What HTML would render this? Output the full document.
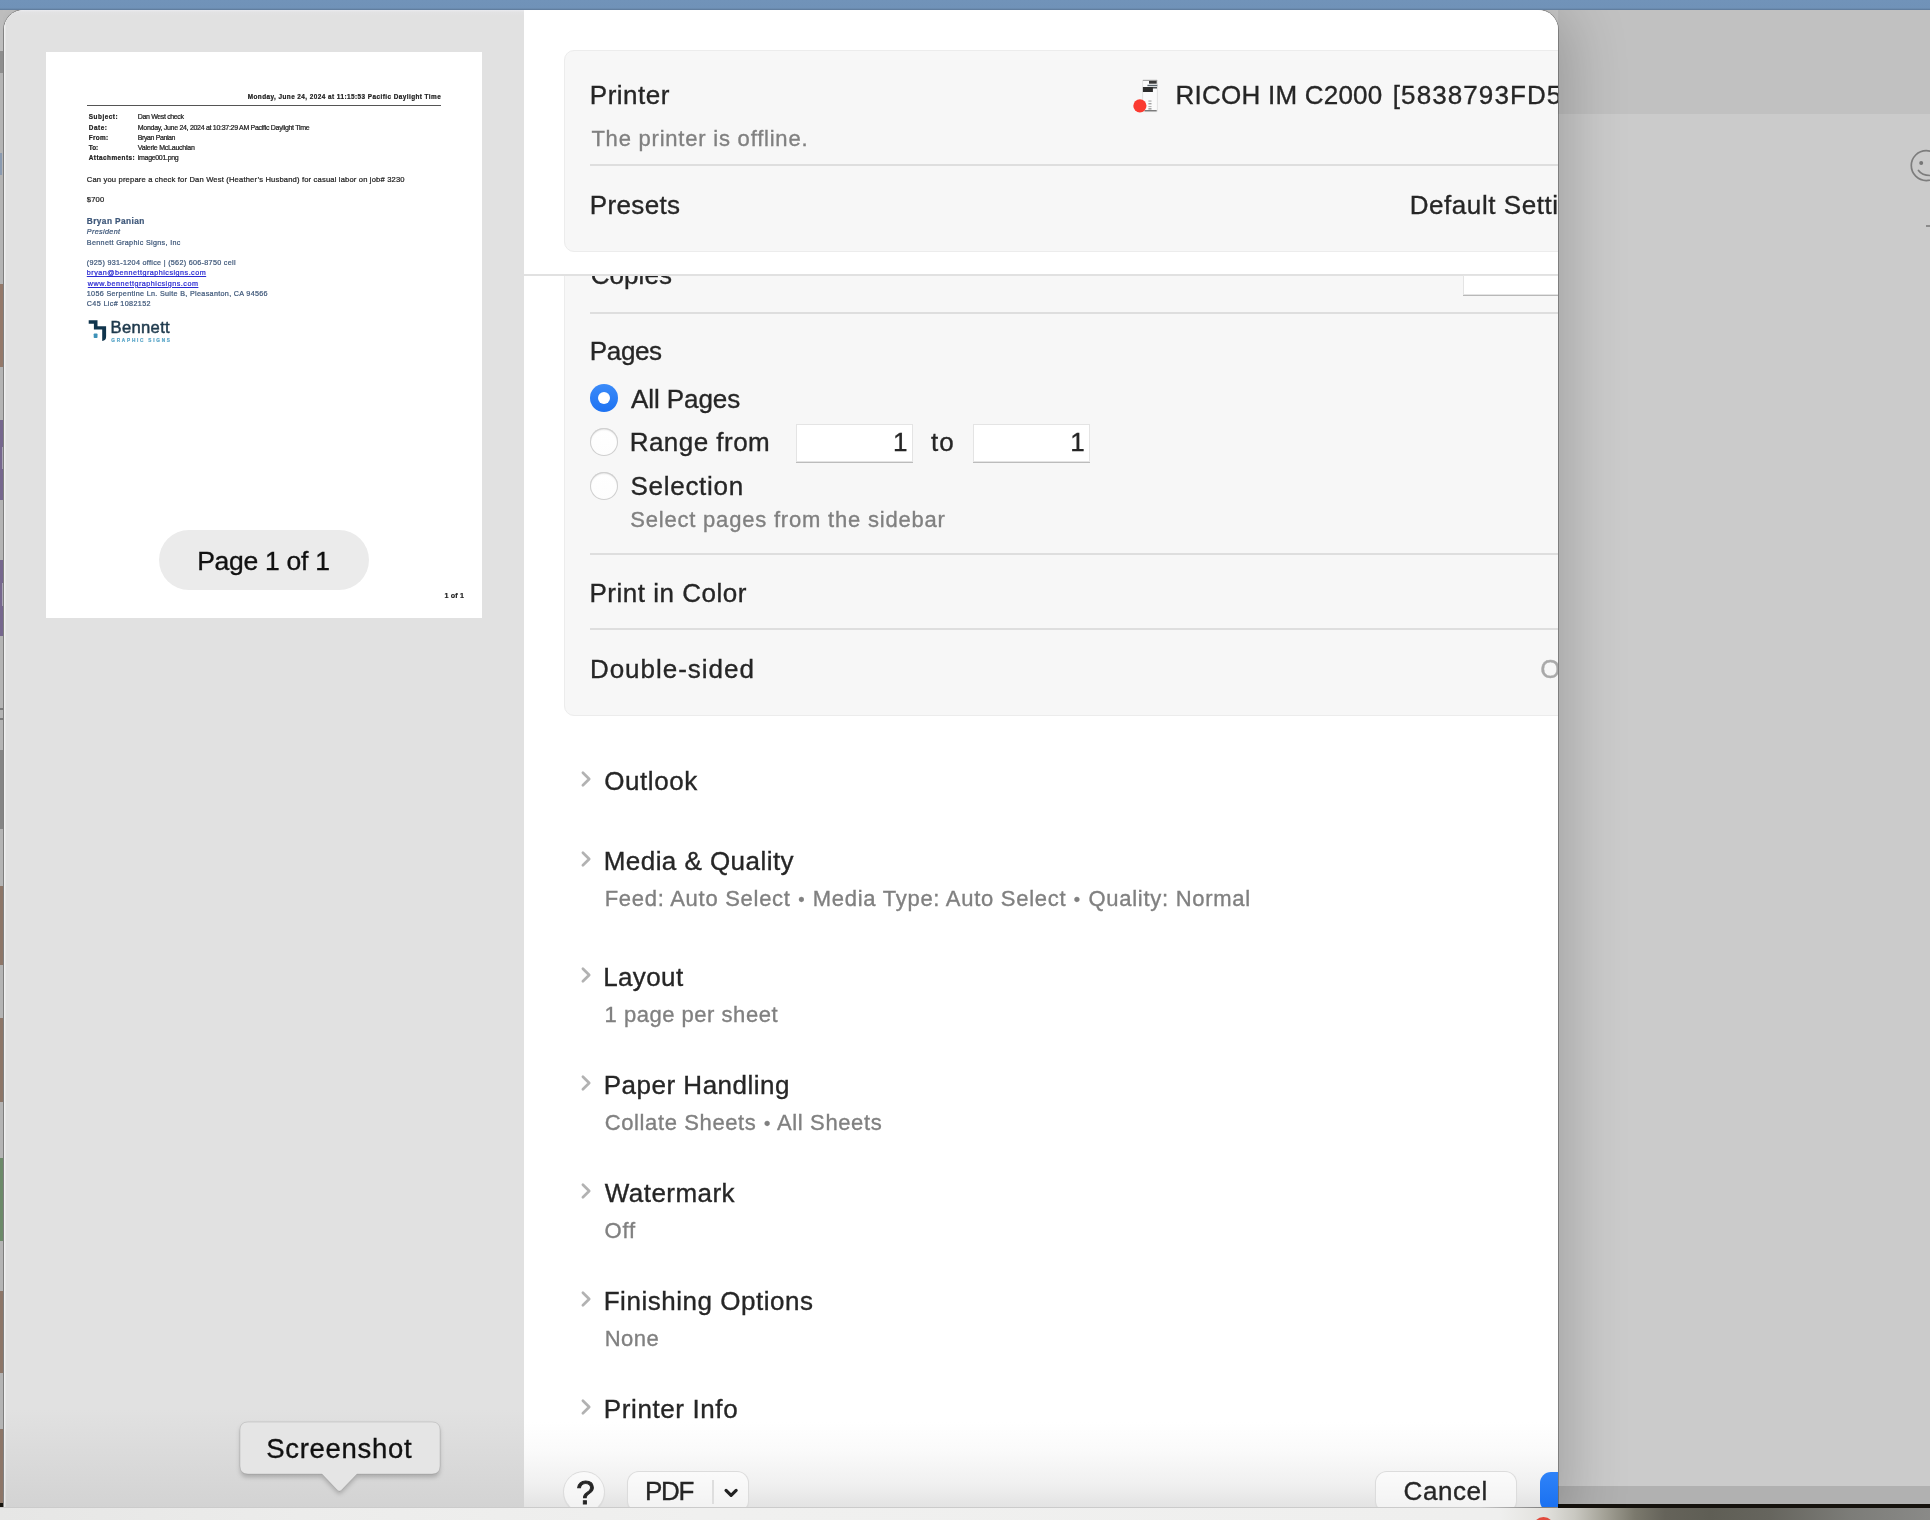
<!DOCTYPE html>
<html><head><meta charset="utf-8">
<style>
*{box-sizing:border-box;margin:0;padding:0}
html,body{width:1930px;height:1520px;overflow:hidden}
body{position:relative;background:#cbcbcb;font-family:"Liberation Sans",sans-serif;color:#262626}
.abs{position:absolute}
.t{position:absolute;white-space:nowrap;line-height:1;color:#262626;-webkit-text-stroke:.35px}
.t.p{-webkit-text-stroke:.22px}
.t.g{color:#808080}
#topbar{left:0;top:0;width:1930px;height:10px;background:linear-gradient(180deg,#7193b9 0,#7092b8 8px,#5c7797 10px)}
#rtop{left:1558px;top:10px;width:372px;height:104px;background:#c1c1c1}
#rmain{left:1558px;top:114px;width:372px;height:1371px;background:#cbcbcb}
#rbot{left:1558px;top:1485.5px;width:372px;height:18px;background:#b1b1b1}
#rblack{left:1558px;top:1503.7px;width:372px;height:4px;background:#15120d}
#bstrip{left:0;top:1507.5px;width:1930px;height:13px;background:linear-gradient(90deg,#e6e6e5 0,#ececeb 300px,#f0f0ef 700px,#efefee 1500px,#e2e1dd 1545px,#c9c8c1 1575px,#a3a196 1605px,#7b796d 1635px,#65635a 1665px,#5f5e55 1710px,#66655e 1770px,#7c7c78 1850px,#8a8a88 1930px)}
#lstrip{left:0;top:10px;width:3.2px;overflow:hidden;height:1497px;background:#b4b4b4}
#lstrip i{position:absolute;left:0;width:5px;display:block}
#dialog{left:4px;top:10px;width:1554px;height:1497px;border-radius:20px 20px 0 0;overflow:hidden;background:#fff}
#dshadow{left:4px;top:10px;width:1554px;height:1497px;border-radius:20px 20px 0 0;box-shadow:0 0 0 1px rgba(0,0,0,.28),0 10px 60px 10px rgba(0,0,0,.22)}
#in{left:-4px;top:-10px;width:1930px;height:1520px;will-change:transform}
#lpane{left:4px;top:10px;width:520px;height:1497px;background:linear-gradient(180deg,#eaebef 0,#e3e3e4 2px,#e1e1e1 6px,#e1e1e1 1400px,#d3d3d3 1497px);box-shadow:inset 1.5px 0 0 rgba(255,255,255,.5)}
#rpane{left:524px;top:10px;width:1034px;height:1497px;background:linear-gradient(180deg,#fff 0,#fff 1412px,#fafafa 1442px,#f0f0f0 1474px,#e3e3e3 1497px)}
#page{left:46px;top:52px;width:436px;height:566px;background:#fff}
#pill{left:159px;top:530px;width:210px;height:60px;border-radius:30px;background:#ebebeb}
.box{background:#f7f7f7;border:1.5px solid #ececec}
#box1{left:564px;top:50px;width:1010px;height:202px;border-radius:10px}
#box2{left:564px;top:240px;width:1010px;height:475.5px;border-radius:10px}
#clip2{left:524px;top:276px;width:1034px;height:460px;overflow:hidden}
#sep{left:524px;top:274px;width:1034px;height:2px;background:#e1e1e1}
.dv{position:absolute;left:590px;width:968px;height:2px;background:#dedede}
.radio{position:absolute;width:28px;height:28px;border-radius:50%;background:linear-gradient(180deg,#fff 0,#fdfdfd 100%);box-shadow:inset 0 0 0 1px #cfcfcf,inset 0 1.5px 2px rgba(0,0,0,.16)}
.radio.on{background:linear-gradient(180deg,#3b8bf9 0,#1d72f2 100%);box-shadow:none}
.radio.on:after{content:"";position:absolute;left:8px;top:8px;width:12px;height:12px;border-radius:50%;background:#fff}
.inp{position:absolute;height:36.5px;background:#fff;box-shadow:0 0 0 1px #e4e4e4,0 1px 0 1px #bcbcbc}
.btn{position:absolute;background:rgba(255,255,255,.55);border-radius:11px;box-shadow:0 0 0 1px #dcdcdc,0 1px 2px rgba(0,0,0,.12)}
</style></head><body>
<div class="abs" id="rtop"></div>
<div class="abs" id="rmain"></div>
<div class="abs" id="rbot"></div>
<div class="abs" id="rblack"></div>
<svg class="abs" style="left:1906px;top:146px" width="24" height="40" viewBox="0 0 24 40"><circle cx="20.3" cy="19.6" r="15" fill="none" stroke="#7d7d7d" stroke-width="1.7"/><circle cx="15.2" cy="17" r="2" fill="#777"/><path d="M12.500 24.500 Q16 29.500 24 29.500" fill="none" stroke="#7d7d7d" stroke-width="1.7" stroke-linecap="round"/></svg><div class="abs" style="left:1926px;top:225px;width:4px;height:2px;background:#8b8b8b"></div>
<div class="abs" id="dshadow"></div>
<div class="abs" id="lstrip">
<i style="top:0.0px;height:41.0px;background:#bdbdbd"></i>
<i style="top:41.0px;height:22.0px;background:#8e8e8e"></i>
<i style="top:274.4px;height:83.1px;background:#94796a"></i>
<i style="top:410.0px;height:80.0px;background:#76678e"></i>
<i style="top:550.0px;height:75.6px;background:#76678e"></i>
<i style="top:740.0px;height:79.4px;background:#858585"></i>
<i style="top:875.6px;height:79.4px;background:#8d7668"></i>
<i style="top:1008.0px;height:84.0px;background:#8d7668"></i>
<i style="top:1148.0px;height:83.0px;background:#6c8a69"></i>
<i style="top:1280.6px;height:82.4px;background:#8d7668"></i>
<i style="top:1418.8px;height:74.2px;background:#8d7668"></i>
<i style="top:1493.0px;height:4.5px;background:#17140f"></i>
<i style="top:143.0px;height:22.0px;background:#8b9bb1;width:2px"></i>
<i style="top:437.0px;height:22.0px;background:#aaa5b4;left:1.500px;width:3px"></i>
<i style="top:573.0px;height:22.6px;background:#aaa5b4;left:1.500px;width:3px"></i>
<i style="top:698.0px;height:2.0px;background:#7a7a7a;"></i>
<i style="top:708.0px;height:2.0px;background:#7a7a7a;"></i>
</div>
<div class="abs" id="topbar"></div>
<div class="abs" id="dialog"><div class="abs" id="in">
<div class="abs" id="lpane"></div>
<div class="abs" id="rpane"></div>
<div class="abs" id="page"></div>
<div class="abs" id="pill"></div>
<div class="abs" style="left:87px;top:104.6px;width:354px;height:1.2px;background:#555"></div>
<svg class="abs" style="left:86px;top:318px" width="24" height="26" viewBox="0 0 24 26"><path d="M2.7 2.2 H11.5 V8.2 H20.1 V18.5 Q20.1 22.9 16.2 22.9 V11.6 H7.900 V5.800 H2.7 Z" fill="#10344c"/><rect x="7.7" y="15.4" width="3.8" height="4.6" rx=".8" fill="#3d92b8"/></svg>
<div class="t p" style="left:247.70px;top:94.40px;font-size:6.4px;letter-spacing:0.442px;font-weight:bold;color:#222;">Monday, June 24, 2024 at 11:15:53 Pacific Daylight Time</div>
<div class="t p" style="left:88.80px;top:114.40px;font-size:6.4px;letter-spacing:0.517px;font-weight:bold;color:#222;">Subject:</div>
<div class="t p" style="left:88.80px;top:124.70px;font-size:6.4px;letter-spacing:0.537px;font-weight:bold;color:#222;">Date:</div>
<div class="t p" style="left:88.80px;top:134.70px;font-size:6.4px;letter-spacing:0.306px;font-weight:bold;color:#222;">From:</div>
<div class="t p" style="left:88.80px;top:145.00px;font-size:6.4px;letter-spacing:-0.066px;font-weight:bold;color:#222;">To:</div>
<div class="t p" style="left:88.80px;top:155.20px;font-size:6.4px;letter-spacing:0.454px;font-weight:bold;color:#222;">Attachments:</div>
<div class="t p" style="left:137.80px;top:113.40px;font-size:7.0px;letter-spacing:-0.357px;color:#222;">Dan West check</div>
<div class="t p" style="left:137.80px;top:123.70px;font-size:7.0px;letter-spacing:-0.293px;color:#222;">Monday, June 24, 2024 at 10:37:29 AM Pacific Daylight Time</div>
<div class="t p" style="left:137.80px;top:133.70px;font-size:7.0px;letter-spacing:-0.394px;color:#222;">Bryan Panian</div>
<div class="t p" style="left:137.80px;top:144.00px;font-size:7.0px;letter-spacing:-0.227px;color:#222;">Valerie McLauchlan</div>
<div class="t p" style="left:137.80px;top:154.20px;font-size:7.0px;letter-spacing:-0.316px;color:#222;">image001.png</div>
<div class="t p" style="left:86.80px;top:175.90px;font-size:7.6px;letter-spacing:0.168px;color:#222;">Can you prepare a check for Dan West (Heather’s Husband) for casual labor on job# 3230</div>
<div class="t p" style="left:86.80px;top:196.10px;font-size:7.6px;letter-spacing:0.177px;color:#222;">$700</div>
<div class="t p" style="left:86.80px;top:217.00px;font-size:8.3px;letter-spacing:0.413px;font-weight:bold;color:#3f587a;">Bryan Panian</div>
<div class="t p" style="left:86.80px;top:228.40px;font-size:7.2px;letter-spacing:0.367px;font-style:italic;color:#3f587a;">President</div>
<div class="t p" style="left:86.80px;top:238.70px;font-size:7.2px;letter-spacing:0.324px;color:#3f587a;">Bennett Graphic Signs, Inc</div>
<div class="t p" style="left:86.80px;top:259.30px;font-size:7.2px;letter-spacing:0.303px;color:#3f587a;">(925) 931-1204 office | (562) 606-8750 cell</div>
<div class="t p" style="left:86.80px;top:269.40px;font-size:7.2px;letter-spacing:0.489px;color:#2a2ad2;text-decoration:underline;">bryan@bennettgraphicsigns.com</div>
<div class="t p" style="left:87.80px;top:279.80px;font-size:7.2px;letter-spacing:0.500px;color:#2a2ad2;text-decoration:underline;">www.bennettgraphicsigns.com</div>
<div class="t p" style="left:86.80px;top:289.90px;font-size:7.2px;letter-spacing:0.320px;color:#3f587a;">1056 Serpentine Ln. Suite B, Pleasanton, CA 94566</div>
<div class="t p" style="left:86.80px;top:300.40px;font-size:7.2px;letter-spacing:0.357px;color:#3f587a;">C45 Lic# 1082152</div>
<div class="t p" style="left:110.50px;top:320.40px;font-size:16.6px;letter-spacing:0.335px;color:#1f3a4d;-webkit-text-stroke:.5px;">Bennett</div>
<div class="t p" style="left:111.30px;top:338.70px;font-size:4.7px;letter-spacing:1.760px;font-weight:bold;color:#5aa6c8;">GRAPHIC SIGNS</div>
<div class="t p" style="left:444.50px;top:592.20px;font-size:7.2px;letter-spacing:0.145px;font-weight:bold;color:#222;">1 of 1</div>
<div class="abs box" id="box1"></div>
<div class="abs" id="clip2"><div class="abs box" id="box2" style="left:40px;top:-36px"></div></div>
<div class="abs" id="sep"></div>
<div class="dv" style="top:164px"></div>
<div class="dv" style="top:312px"></div>
<div class="dv" style="top:553px"></div>
<div class="dv" style="top:628px"></div>
<div class="abs" style="left:1464px;top:276px;width:110px;height:18px;background:#fff;box-shadow:0 0 0 1px #e4e4e4,0 1px 0 1px #b8b8b8"></div>
<div class="abs" style="left:524px;top:276px;width:1034px;height:40px;overflow:hidden"><div class="abs" style="left:-524px;top:-276px;width:1930px;height:400px"><div class="t " style="left:590.70px;top:261.90px;font-size:26px;letter-spacing:0.073px;">Copies</div></div></div>
<div class="radio on" style="left:590px;top:384px"></div>
<div class="radio" style="left:590px;top:428px"></div>
<div class="radio" style="left:590px;top:472px"></div>
<div class="inp" style="left:796.5px;top:424.5px;width:115px"></div>
<div class="inp" style="left:973.5px;top:424.5px;width:115px"></div>
<svg class="abs" style="left:578px;top:769px" width="16" height="20" viewBox="0 0 16 20"><path d="M4.9 3.7 L11.2 10 L4.9 16.3" fill="none" stroke="#b2b2b2" stroke-width="2.7" stroke-linecap="round" stroke-linejoin="round"/></svg>
<svg class="abs" style="left:578px;top:849px" width="16" height="20" viewBox="0 0 16 20"><path d="M4.9 3.7 L11.2 10 L4.9 16.3" fill="none" stroke="#b2b2b2" stroke-width="2.7" stroke-linecap="round" stroke-linejoin="round"/></svg>
<svg class="abs" style="left:578px;top:965px" width="16" height="20" viewBox="0 0 16 20"><path d="M4.9 3.7 L11.2 10 L4.9 16.3" fill="none" stroke="#b2b2b2" stroke-width="2.7" stroke-linecap="round" stroke-linejoin="round"/></svg>
<svg class="abs" style="left:578px;top:1073px" width="16" height="20" viewBox="0 0 16 20"><path d="M4.9 3.7 L11.2 10 L4.9 16.3" fill="none" stroke="#b2b2b2" stroke-width="2.7" stroke-linecap="round" stroke-linejoin="round"/></svg>
<svg class="abs" style="left:578px;top:1181px" width="16" height="20" viewBox="0 0 16 20"><path d="M4.9 3.7 L11.2 10 L4.9 16.3" fill="none" stroke="#b2b2b2" stroke-width="2.7" stroke-linecap="round" stroke-linejoin="round"/></svg>
<svg class="abs" style="left:578px;top:1289px" width="16" height="20" viewBox="0 0 16 20"><path d="M4.9 3.7 L11.2 10 L4.9 16.3" fill="none" stroke="#b2b2b2" stroke-width="2.7" stroke-linecap="round" stroke-linejoin="round"/></svg>
<svg class="abs" style="left:578px;top:1397px" width="16" height="20" viewBox="0 0 16 20"><path d="M4.9 3.7 L11.2 10 L4.9 16.3" fill="none" stroke="#b2b2b2" stroke-width="2.7" stroke-linecap="round" stroke-linejoin="round"/></svg>
<div class="btn" style="left:564px;top:1472px;width:40px;height:40px;border-radius:50%"></div>
<div class="btn" style="left:628px;top:1472px;width:120px;height:40px"></div>
<div class="abs" style="left:712px;top:1480px;width:2px;height:24px;background:#dedede"></div>
<svg class="abs" style="left:720px;top:1482px" width="22" height="20" viewBox="0 0 22 20"><path d="M6.05 8.4 L11.1 13.4 L16.15 8.4" fill="none" stroke="#222" stroke-width="3.2" stroke-linecap="round" stroke-linejoin="round"/></svg>
<div class="btn" style="left:1376px;top:1472px;width:140px;height:40px"></div>
<div class="abs" style="left:1540px;top:1472px;width:60px;height:40px;border-radius:11px;background:linear-gradient(180deg,#2f83f8,#176ef0)"></div>
<svg class="abs" style="left:1132px;top:78px" width="30" height="36" viewBox="0 0 30 36"><rect x="10.6" y="2.1" width="14.8" height="31.5" rx=".8" fill="#fbfbfb" stroke="#dadada" stroke-width=".7"/><rect x="10.9" y="1.9" width="14.3" height="1" fill="#9c9c9c"/><rect x="17" y="2.9" width="7.7" height="2.8" fill="#383838"/><rect x="15.4" y="6.8" width="9.9" height="1.4" fill="#5a656d"/><rect x="16.4" y="9" width="8.6" height="1.5" fill="#4a4f52"/><rect x="10.9" y="9" width="10" height="5" fill="#2d2d2d"/><rect x="16.4" y="22.5" width="3.1" height="1.1" fill="#a2a2a2"/><rect x="16.4" y="25" width="3.1" height="1.4" fill="#a2a2a2"/><rect x="16.4" y="28.2" width="3.1" height=".9" fill="#a2a2a2"/><rect x="16.4" y="30" width="3.1" height="1.6" fill="#a2a2a2"/><rect x="12.6" y="32.2" width="12.1" height="1.1" fill="#5b5b5b"/><circle cx="7.9" cy="27.8" r="6.6" fill="#fb3a30"/></svg>
<svg class="abs" style="left:228px;top:1410px" width="226" height="94" viewBox="0 0 226 94"><defs><filter id="ts" x="-10%" y="-20%" width="120%" height="150%"><feGaussianBlur stdDeviation="2.2"/></filter></defs><path d="M20 13 H204 Q212 13 212 21 V58 Q212 66 204 66 H129 L113.6 81.5 Q111.4 83.4 109.200 81.5 L94 66 H20 Q12 66 12 58 V21 Q12 13 20 13 Z" fill="rgba(0,0,0,.2)" filter="url(#ts)" transform="translate(0,1.5)"/><path d="M20 12 H204 Q212 12 212 20 V56 Q212 64 204 64 H129 L113.4 80.2 Q111.4 82 109.400 80.2 L94 64 H20 Q12 64 12 56 V20 Q12 12 20 12 Z" fill="#e5e5e5" stroke="rgba(0,0,0,.10)" stroke-width="1"/></svg>
<div class="t " style="left:589.80px;top:81.60px;font-size:26px;letter-spacing:0.513px;">Printer</div>
<div class="t g" style="left:591.40px;top:127.50px;font-size:22px;letter-spacing:0.782px;">The printer is offline.</div>
<div class="t " style="left:589.80px;top:191.80px;font-size:26px;letter-spacing:0.359px;">Presets</div>
<div class="t " style="left:589.80px;top:337.90px;font-size:26px;letter-spacing:-0.355px;">Pages</div>
<div class="t " style="left:631.00px;top:385.70px;font-size:26px;letter-spacing:-0.080px;">All Pages</div>
<div class="t " style="left:629.70px;top:429.40px;font-size:26px;letter-spacing:0.469px;">Range from</div>
<div class="t " style="left:931.10px;top:429.40px;font-size:26px;letter-spacing:0.876px;">to</div>
<div class="t " style="left:630.50px;top:473.00px;font-size:26px;letter-spacing:0.713px;">Selection</div>
<div class="t g" style="left:630.20px;top:508.80px;font-size:22px;letter-spacing:0.802px;">Select pages from the sidebar</div>
<div class="t " style="left:589.50px;top:579.80px;font-size:26px;letter-spacing:0.514px;">Print in Color</div>
<div class="t " style="left:589.90px;top:655.90px;font-size:26px;letter-spacing:0.978px;">Double-sided</div>
<div class="t " style="left:604.30px;top:767.70px;font-size:26px;letter-spacing:0.549px;">Outlook</div>
<div class="t " style="left:603.70px;top:847.60px;font-size:26px;letter-spacing:0.455px;">Media &amp; Quality</div>
<div class="t g" style="left:604.70px;top:887.60px;font-size:22px;letter-spacing:0.725px;">Feed: Auto Select <span style="font-size:.82em;position:relative;top:.04em;padding:0 .7px">•</span> Media Type: Auto Select <span style="font-size:.82em;position:relative;top:.04em;padding:0 .7px">•</span> Quality: Normal</div>
<div class="t " style="left:603.20px;top:963.60px;font-size:26px;letter-spacing:0.372px;">Layout</div>
<div class="t g" style="left:604.50px;top:1003.60px;font-size:22px;letter-spacing:0.526px;">1 page per sheet</div>
<div class="t " style="left:603.70px;top:1071.70px;font-size:26px;letter-spacing:0.510px;">Paper Handling</div>
<div class="t g" style="left:604.70px;top:1111.70px;font-size:22px;letter-spacing:0.621px;">Collate Sheets <span style="font-size:.82em;position:relative;top:.04em;padding:0 .7px">•</span> All Sheets</div>
<div class="t " style="left:604.80px;top:1179.80px;font-size:26px;letter-spacing:0.456px;">Watermark</div>
<div class="t g" style="left:604.50px;top:1219.70px;font-size:22px;letter-spacing:0.786px;">Off</div>
<div class="t " style="left:603.70px;top:1287.80px;font-size:26px;letter-spacing:0.533px;">Finishing Options</div>
<div class="t g" style="left:604.70px;top:1327.70px;font-size:22px;letter-spacing:0.481px;">None</div>
<div class="t " style="left:603.80px;top:1395.70px;font-size:26px;letter-spacing:0.608px;">Printer Info</div>
<div class="t " style="left:644.90px;top:1478.00px;font-size:26px;letter-spacing:-1.309px;">PDF</div>
<div class="t " style="left:1403.60px;top:1478.00px;font-size:26px;letter-spacing:0.529px;">Cancel</div>
<div class="t " style="left:266.20px;top:1434.80px;font-size:27.5px;letter-spacing:0.714px;color:#111">Screenshot</div>
<div class="t " style="left:197.20px;top:547.90px;font-size:26.5px;letter-spacing:-0.282px;color:#111">Page 1 of 1</div>
<div class="t " style="left:1175.60px;top:81.80px;font-size:26px;letter-spacing:0.226px;">RICOH IM C2000</div>
<div class="t " style="left:1392.80px;top:81.80px;font-size:26px;letter-spacing:1.090px;">[5838793FD5</div>
<div class="t " style="left:1409.70px;top:192.20px;font-size:26px;letter-spacing:0.562px;">Default Settings</div>
<div class="t " style="left:1540.30px;top:656.20px;font-size:26px;letter-spacing:0.000px;color:#a9a9a9">Off</div>
<div class="t " style="left:893.00px;top:429.40px;font-size:26px;letter-spacing:0.000px;">1</div>
<div class="t " style="left:1070.30px;top:429.40px;font-size:26px;letter-spacing:0.000px;">1</div>
<div class="t " style="left:576.30px;top:1475.60px;font-size:33px;letter-spacing:0.000px;color:#262626;-webkit-text-stroke:.9px #262626">?</div>
</div></div>
<div class="abs" id="bstrip"></div>
<div class="abs" style="left:1533px;top:1516.6px;width:21px;height:21px;border-radius:50%;background:#e14a3d"></div>
<div class="abs" style="left:0;top:1507px;width:1545px;height:1px;background:linear-gradient(90deg,#cbcbcb 0,#cbcbcb 1480px,rgba(203,203,203,0) 1545px)"></div>
</body></html>
